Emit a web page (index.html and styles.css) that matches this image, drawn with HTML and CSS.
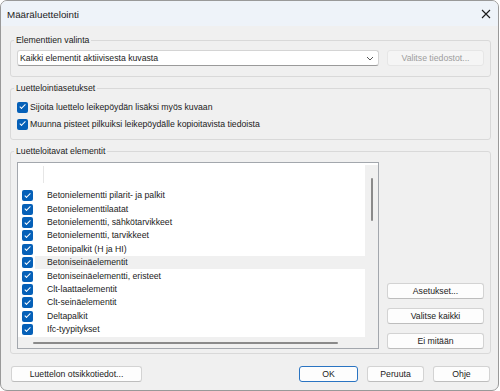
FILE: index.html
```html
<!DOCTYPE html>
<html lang="fi">
<head>
  <meta charset="UTF-8">
  <meta name="viewport" content="width=device-width, initial-scale=1.0">
  <title>Määräluettelointi</title>
  <link rel="stylesheet" href="styles.css">
</head>
<body>
  <div class="window">
    <div class="titlebar">
      <span class="title">Määräluettelointi</span>
      <svg class="close" width="10" height="10" viewBox="0 0 10 10">
        <path d="M1 1 L9 9 M9 1 L1 9" stroke="#1b1b1b" stroke-width="1.1" fill="none"/>
      </svg>
    </div>

    <div class="dialog">
      <fieldset class="group group-select">
        <legend>Elementtien valinta</legend>
        <div class="select-row">
          <div class="combo">
            <span>Kaikki elementit aktiivisesta kuvasta</span>
            <svg width="8" height="5" viewBox="0 0 8 5">
              <path d="M1 1 L4 4 L7 1" stroke="#555" stroke-width="1" fill="none"/>
            </svg>
          </div>
          <button class="btn" disabled>Valitse tiedostot...</button>
        </div>
      </fieldset>

      <fieldset class="group group-options">
        <legend>Luettelointiasetukset</legend>
        <label class="check"><span class="box"></span>Sijoita luettelo leikepöydän lisäksi myös kuvaan</label>
        <label class="check"><span class="box"></span>Muunna pisteet pilkuiksi leikepöydälle kopioitavista tiedoista</label>
      </fieldset>

      <fieldset class="group group-list">
        <legend>Luetteloitavat elementit</legend>
        <div class="list-row">
          <div class="listview">
            <div class="list-content">
              <div class="list-header"><span class="col-sep"></span></div>
              <div class="item"><span class="box"></span><span class="item-label">Betonielementti pilarit- ja palkit</span></div>
              <div class="item"><span class="box"></span><span class="item-label">Betonielementtilaatat</span></div>
              <div class="item"><span class="box"></span><span class="item-label">Betonielementti, sähkötarvikkeet</span></div>
              <div class="item"><span class="box"></span><span class="item-label">Betonielementti, tarvikkeet</span></div>
              <div class="item"><span class="box"></span><span class="item-label">Betonipalkit (H ja HI)</span></div>
              <div class="item selected"><span class="box"></span><span class="item-label">Betoniseinäelementit</span></div>
              <div class="item"><span class="box"></span><span class="item-label">Betoniseinäelementti, eristeet</span></div>
              <div class="item"><span class="box"></span><span class="item-label">Clt-laattaelementit</span></div>
              <div class="item"><span class="box"></span><span class="item-label">Clt-seinäelementit</span></div>
              <div class="item"><span class="box"></span><span class="item-label">Deltapalkit</span></div>
              <div class="item"><span class="box"></span><span class="item-label">Ifc-tyypitykset</span></div>
            </div>
            <div class="vscroll"><span class="vthumb"></span></div>
            <div class="hscroll"><span class="hthumb"></span></div>
            <div class="corner"></div>
          </div>
          <div class="side-buttons">
            <button class="btn">Asetukset...</button>
            <button class="btn">Valitse kaikki</button>
            <button class="btn">Ei mitään</button>
          </div>
        </div>
      </fieldset>

      <div class="footer">
        <button class="btn btn-wide">Luettelon otsikkotiedot...</button>
        <div class="footer-right">
          <button class="btn btn-default">OK</button>
          <button class="btn btn-small">Peruuta</button>
          <button class="btn btn-small">Ohje</button>
        </div>
      </div>
    </div>
  </div>
</body>
</html>
```

FILE: styles.css
```css
body {
  margin: 0;
  background: #ffffff;
  font-family: "Liberation Sans", Arial, sans-serif;
  font-size: 8.7px;
  line-height: 11px;
  color: #1b1b1b;
}
.window {
  width: 499px;
  height: 391px;
  box-sizing: border-box;
  border: 1px solid #999999;
  border-radius: 7px;
  background: #f0f0f0;
  overflow: hidden;
}
.titlebar {
  height: 25px;
  background: #eef3f9;
  display: flex;
  align-items: center;
  justify-content: space-between;
  padding: 0 7px 0 6px;
}
.title {
  font-size: 9.8px;
  padding-top: 2px;
}
.close {
  display: block;
}
.dialog {
  padding: 0 7px 0 9px;
}
.group {
  margin: 9px 0 0 0;
  border: 1px solid #d9d9d9;
  border-radius: 3px;
  padding: 4px 6px 10px 6px;
  min-width: 0;
}
.group legend {
  padding: 0 2px;
  margin-left: -3px;
}
.group-options {
  margin-top: 6px;
  padding-top: 6px;
  padding-bottom: 8px;
}
.group-list {
  margin-top: 6px;
  padding-top: 5px;
  padding-bottom: 4px;
}
.select-row,
.list-row {
  display: flex;
  gap: 8px;
}
.list-row {
  align-items: flex-end;
}
.combo {
  flex: 1;
  height: 16px;
  box-sizing: border-box;
  border: 1px solid #d4d4d4;
  border-bottom-color: #9a9a9a;
  border-radius: 3px;
  background: #ffffff;
  display: flex;
  align-items: center;
  justify-content: space-between;
  padding: 0 4px 0 2px;
}
.combo svg {
  display: block;
}
.btn {
  height: 16px;
  box-sizing: border-box;
  padding: 0;
  border: 1px solid #d3d3d3;
  border-bottom-color: #bdbdbd;
  border-radius: 3px;
  background: #fdfdfd;
  font: inherit;
  color: inherit;
}
.btn:disabled {
  background: #f5f5f5;
  border-color: #e6e6e6;
  color: #9d9d9d;
}
.select-row .btn,
.side-buttons .btn {
  width: 97px;
}
.check {
  display: flex;
  align-items: center;
  height: 14px;
  gap: 2px;
}
.check + .check {
  margin-top: 3px;
}
.box {
  position: relative;
  width: 11px;
  height: 11px;
  box-sizing: border-box;
  border-radius: 2px;
  background: #0560b8;
  flex: none;
}
.box::after {
  content: "";
  position: absolute;
  left: 3.6px;
  top: 1.6px;
  width: 2.4px;
  height: 5px;
  border-right: 1.2px solid #ffffff;
  border-bottom: 1.2px solid #ffffff;
  transform: rotate(45deg);
}
.listview {
  width: 362px;
  height: 187px;
  box-sizing: border-box;
  border: 1px solid #a3a7ad;
  background: #ffffff;
  display: grid;
  grid-template-columns: 1fr 13px;
  grid-template-rows: 1fr 11px;
}
.list-content {
  overflow: hidden;
}
.list-header {
  height: 23px;
}
.col-sep {
  display: block;
  width: 1px;
  height: 17px;
  margin: 3px 0 0 25px;
  background: #e6e6e6;
}
.item {
  display: flex;
  align-items: center;
  height: 13.4px;
  padding-left: 4px;
}
.item-label {
  flex: 1;
  height: 13px;
  line-height: 13px;
  margin-left: 2px;
  padding-left: 12px;
}
.item.selected .item-label {
  background: #f0f0f0;
}
.vscroll {
  background: #f0f0f0;
  margin-top: 2px;
}
.vthumb {
  display: block;
  width: 2px;
  height: 43px;
  margin: 13px 0 0 6px;
  border-radius: 1px;
  background: #8a8a8a;
}
.hscroll {
  background: #f0f0f0;
}
.hthumb {
  display: block;
  width: 305px;
  height: 2px;
  margin: 5px 0 0 15px;
  border-radius: 1px;
  background: #8a8a8a;
}
.corner {
  background: #f0f0f0;
}
.side-buttons {
  display: flex;
  flex-direction: column;
  gap: 9px;
}
.footer {
  display: flex;
  justify-content: space-between;
  margin: 12px 1px 0 1px;
}
.footer-right {
  display: flex;
  gap: 9px;
}
.btn-wide {
  width: 131px;
}
.btn-default {
  width: 59px;
  border-color: #2a74c2;
}
.btn-small {
  width: 57px;
}
```
